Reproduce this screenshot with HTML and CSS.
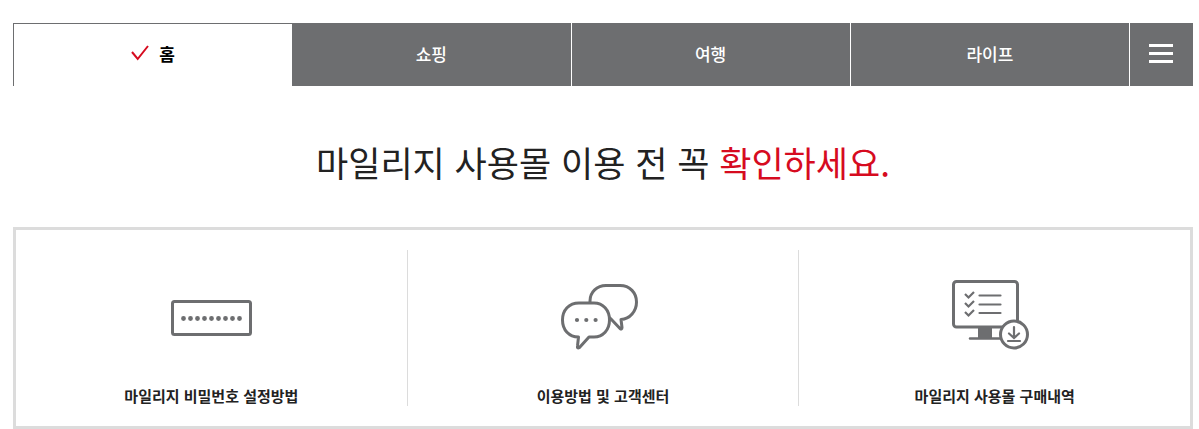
FILE: index.html
```html
<!DOCTYPE html>
<html lang="ko">
  <head>
    <title>마일리지 사용몰</title>

    <meta charset="utf-8" />
    <meta name="viewport" content="width=device-width, initial-scale=1" />

    <link rel="stylesheet" href="styles.css">
  </head>

  <body>
    <nav class="mall-nav">
      <a href="#home" class="mall-nav__tab mall-nav__tab--on" aria-current="page">
        <svg class="mall-nav__check" width="18" height="18" viewBox="0 0 18 18" aria-hidden="true">
          <path d="M1 7l5.700 7L17 1" fill="none" stroke="#d60b1f" stroke-width="2" />
        </svg>
        홈
      </a>
      <a href="#shopping" class="mall-nav__tab">쇼핑</a>
      <a href="#travel" class="mall-nav__tab">여행</a>
      <a href="#life" class="mall-nav__tab">라이프</a>
      <button type="button" class="mall-nav__menu" aria-label="전체메뉴">
        <svg width="24" height="19" viewBox="0 0 24 19" aria-hidden="true">
          <path d="M0 0h24v3H0zM0 8h24v3H0zM0 16h24v3H0z" fill="#fff" />
        </svg>
      </button>
    </nav>

    <main>
      <h1 class="guide-title">마일리지 사용몰 이용 전 꼭 <em>확인하세요.</em></h1>

      <ul class="guide">
        <li class="guide__item">
          <a href="#password" class="guide__link">
            <svg class="guide__icon" width="82" height="76" viewBox="0 -1 82 76" aria-hidden="true">
              <rect x="2.500" y="25.500" width="78" height="33" rx="2" fill="none" stroke="#6d6e70" stroke-width="3" />
              <path d="M13.500 42.500h56.500" fill="none" stroke="#6d6e70" stroke-width="4.800" stroke-linecap="round" stroke-dasharray="0 7" />
            </svg>
            마일리지 비밀번호 설정방법
          </a>
        </li>
        <li class="guide__item">
          <a href="#help" class="guide__link">
            <svg class="guide__icon" width="84" height="76" viewBox="0 -1 84 76" aria-hidden="true">
              <g fill="#fff" stroke="#6d6e70" stroke-width="3" stroke-linejoin="round">
                <path d="M29 27V25C29 16 36 9.500 45 9.500H59C69 9.500 75.500 17 75.500 26C75.500 35 69 43 60 43.500L61 51.500Q61 54 59 52.500L50 43Z" />
                <path d="M18 27H33C42 27 48.500 34 48.500 44C48.500 54 42 61 33 61H28L18.500 71.500Q16 73 16.500 70L17.500 61C8 61 1.500 54 1.500 44C1.500 34 8 27 18 27Z" />
              </g>
              <path d="M16 44h19" fill="none" stroke="#6d6e70" stroke-width="4.200" stroke-linecap="round" stroke-dasharray="0 9.300" />
            </svg>
            이용방법 및 고객센터
          </a>
        </li>
        <li class="guide__item">
          <a href="#history" class="guide__link">
            <svg class="guide__icon" width="92" height="76" viewBox="0 0 92 76" aria-hidden="true">
              <g fill="none" stroke="#6d6e70" stroke-width="3">
                <rect x="4.500" y="6.500" width="64" height="45.500" rx="3" />
                <path d="M21 63.500h34" stroke-width="2.500" stroke-linecap="round" />
                <g stroke-width="2.200">
                  <path d="M30.500 20.500h21M30.500 29.500h21M30.500 38h21" stroke-linecap="round" />
                  <path d="M16 19l3.500 3.500 5.500-5.500M16 28l3.500 3.500 5.500-5.500M16 37l3.500 3.500 5.500-5.500" />
                </g>
              </g>
              <path d="M29 52h14v12H29z" fill="#6d6e70" />
              <circle cx="65" cy="59.500" r="13.500" fill="#fff" stroke="#6d6e70" stroke-width="3" />
              <path d="M65 52v10M60 58.500l5 4.500 5-4.500M59 66h12" fill="none" stroke="#6d6e70" stroke-width="2.200" stroke-linecap="round" />
            </svg>
            마일리지 사용몰 구매내역
          </a>
        </li>
      </ul>
    </main>
  </body>
</html>
```
FILE: styles.css
```css
* {
  box-sizing: border-box;
}

body {
  margin: 0;
  padding: 23px 6px 0 13px;
  background: #fff;
  color: #222;
  font-family: "Noto Sans CJK KR", sans-serif;
}

a {
  color: inherit;
  text-decoration: none;
}

/* top tabs */
.mall-nav {
  display: flex;
  height: 63px;
}

.mall-nav__tab {
  flex: 1;
  display: flex;
  align-items: center;
  justify-content: center;
  gap: 10px;
  padding-bottom: 2px;
  border-right: 1px solid #fff;
  background: #6d6e70;
  color: #fff;
  font-size: 17px;
  font-weight: 500;
}

.mall-nav__tab--on {
  padding-bottom: 3px;
  border: solid #6d6e70;
  border-width: 1px 0 0 1px;
  background: #fff;
  color: #000;
  font-weight: 700;
}

.mall-nav__menu {
  display: flex;
  align-items: center;
  justify-content: center;
  width: 63px;
  padding: 0 2px 2px 0;
  border: 0;
  background: #6d6e70;
  cursor: pointer;
}

/* guide box */
.guide-title {
  margin: 50px 0 39px;
  font-size: 35px;
  font-weight: 400;
  line-height: 52px;
  text-align: center;
}

.guide-title em {
  color: #d60b1f;
  font-style: normal;
}

.guide {
  display: flex;
  margin: 0;
  padding: 20px 0;
  border: 3px solid #dcdcdc;
  list-style: none;
}

.guide__item {
  flex: 1;
}

.guide__item + .guide__item {
  border-left: 1px solid #dcdcdc;
}

.guide__link {
  display: flex;
  flex-direction: column;
  align-items: center;
  gap: 34px;
  padding: 25px 0 0;
  font-size: 15px;
  font-weight: 700;
  line-height: 21px;
}
```
